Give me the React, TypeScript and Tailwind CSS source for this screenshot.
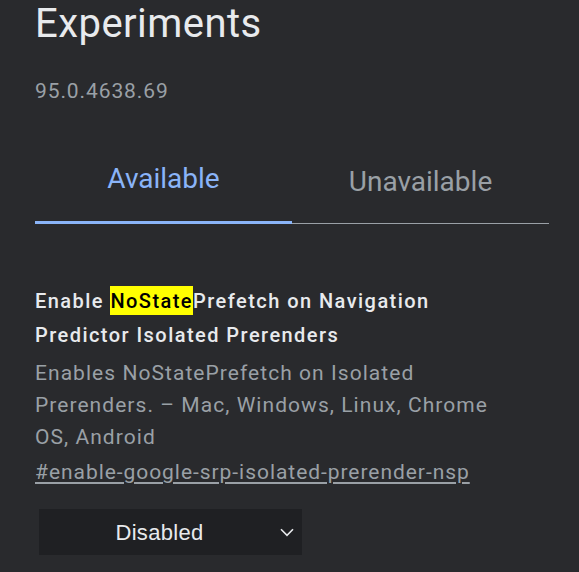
import { useState } from "react";

type TabKey = "available" | "unavailable";

const TABS: { key: TabKey; label: string }[] = [
  { key: "available", label: "Available" },
  { key: "unavailable", label: "Unavailable" },
];

function Chevron() {
  return (
    <svg width="14" height="9" viewBox="0 0 14 9" fill="none" aria-hidden>
      <path d="M1 1.2 7 7.4 13 1.2" stroke="#e8eaed" strokeWidth="1.6" />
    </svg>
  );
}

function Tabs({ active, onChange }: { active: TabKey; onChange: (k: TabKey) => void }) {
  return (
    <div className="mt-[40px] flex items-end">
      {TABS.map((t) => {
        const on = t.key === active;
        return (
          <button
            key={t.key}
            onClick={() => onChange(t.key)}
            className={
              on
                ? "flex-1 pt-[16px] pb-[22px] text-[28px] leading-[40px] text-[#8ab4f8] border-b-[3px] border-[#8ab4f8]"
                : "flex-1 pt-[16px] pb-[21px] text-[28px] leading-[40px] text-[#9aa0a6] border-b border-[#9aa0a6]"
            }
          >
            {t.label}
          </button>
        );
      })}
    </div>
  );
}

export default function App() {
  const [tab, setTab] = useState<TabKey>("available");

  return (
    <div
      className="min-h-screen bg-[#292a2d] pl-[35px] pr-[30px] text-[#e8eaed]"
      style={{ fontFamily: "Roboto, 'Liberation Sans', sans-serif" }}
    >
      <h1 className="text-[40px] leading-[48px] font-normal tracking-[0.45px]">Experiments</h1>
      <div className="mt-[31px] text-[21px] leading-[24px] tracking-[0.9px] text-[#9aa0a6]">
        95.0.4638.69
      </div>

      <Tabs active={tab} onChange={setTab} />

      <article className="mt-[60px] max-w-[472px]">
        <h3 className="text-[20px] leading-[34px] font-medium tracking-[1.45px] text-[#e8eaed]">
          Enable{" "}
          <span className="bg-[#ffff00] pt-[3px] pb-[2px] text-[#000000]">NoState</span>
          Prefetch on Navigation Predictor Isolated Prerenders
        </h3>
        <p className="mt-[5px] text-[21px] leading-[32px] tracking-[1.05px] text-[#9aa0a6]">
          Enables NoStatePrefetch on Isolated Prerenders. – Mac, Windows, Linux, Chrome OS,
          Android
        </p>
        <a
          href="#enable-google-srp-isolated-prerender-nsp"
          className="mt-[3px] block text-[21px] leading-[32px] tracking-[0.95px] text-[#9aa0a6] underline underline-offset-[3px]"
        >
          #enable-google-srp-isolated-prerender-nsp
        </a>
      </article>

      <div className="ml-[4px] mt-[21px] flex h-[46px] w-[263px] items-center bg-[#1f2023]">
        <span
          className="flex-1 text-center text-[22px] tracking-[0.3px] text-[#e8eaed]"
          style={{ fontFamily: "'Liberation Sans', Arial, sans-serif" }}
        >
          Disabled
        </span>
        <span className="mr-[8px] flex">
          <Chevron />
        </span>
      </div>
    </div>
  );
}
